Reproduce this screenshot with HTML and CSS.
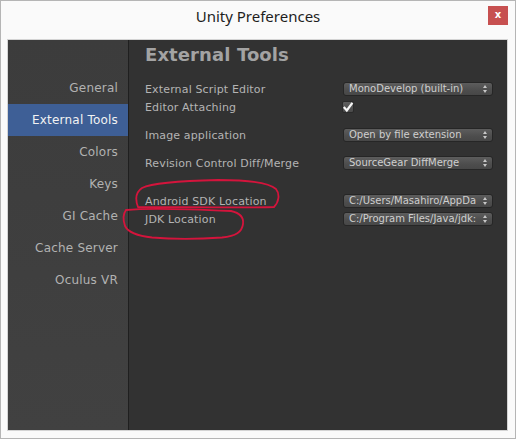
FILE: index.html
```html
<!DOCTYPE html>
<html>
<head>
<meta charset="utf-8">
<link rel="stylesheet" href="styles.css">
</head>
<body>
<div class="window">
  <div class="titlebar">
    <div class="title">Unity Preferences</div>
    <div class="close">x</div>
  </div>
  <div class="frame">
    <div class="content">
      <ul class="sidebar">
        <li>General</li>
        <li class="active">External Tools</li>
        <li>Colors</li>
        <li>Keys</li>
        <li>GI Cache</li>
        <li>Cache Server</li>
        <li>Oculus VR</li>
      </ul>
      <div class="main">
        <h1 class="heading">External Tools</h1>
        <div class="group">
          <div class="row"><span class="label">External Script Editor</span><div class="popup"><span class="ptext">MonoDevelop (built-in)</span><span class="arrows"></span></div></div>
          <div class="row"><span class="label">Editor Attaching</span><div class="check"><svg viewBox="0 0 12 12" width="12" height="12"><path d="M1.8 6 L4.8 9.4 L10.4 1.8" fill="none" stroke="#f6f6f6" stroke-width="2.2"/></svg></div></div>
        </div>
        <div class="group">
          <div class="row"><span class="label">Image application</span><div class="popup"><span class="ptext">Open by file extension</span><span class="arrows"></span></div></div>
        </div>
        <div class="group">
          <div class="row"><span class="label">Revision Control Diff/Merge</span><div class="popup"><span class="ptext">SourceGear DiffMerge</span><span class="arrows"></span></div></div>
        </div>
        <div class="group sdk">
          <div class="row"><span class="label">Android SDK Location</span><div class="popup"><span class="ptext">C:/Users/Masahiro/AppDa</span><span class="arrows"></span></div></div>
          <div class="row"><span class="label">JDK Location</span><div class="popup"><span class="ptext">C:/Program Files/Java/jdk:</span><span class="arrows"></span></div></div>
        </div>
      </div>
    </div>
  </div>
  <svg class="marks" width="516" height="439" viewBox="0 0 516 439">
    <path d="M138 207 C135 199 136 192 142 188 C152 183 175 181 218 180 C245 180 268 182 276 189 C280 194 279 202 274 207 C250 208 180 207 138 207" fill="none" stroke="#d4143c" stroke-width="1.8" stroke-linecap="round"/>
    <path d="M126 210 C145 208 190 209 231 211 C240 213 244 217 243 224 C242 232 236 236 222 237.5 C200 239 170 239 152 237.5 C138 236 128 232 125 226 C123 220 123 214 126 210" fill="none" stroke="#d4143c" stroke-width="1.8" stroke-linecap="round"/>
  </svg>
</div>
</body>
</html>
```

FILE: styles.css
```css
* { box-sizing: border-box; }
html, body { margin: 0; padding: 0; }
body { width: 516px; height: 439px; background: #f9f9f9; overflow: hidden; }

.window {
  position: relative;
  width: 516px;
  height: 439px;
  border: 1px solid #b5b5b5;
  background: #fafafa;
  display: flex;
  flex-direction: column;
}

.titlebar {
  height: 38px;
  position: relative;
  display: flex;
  justify-content: center;
  align-items: flex-start;
}
.title {
  font-family: "Noto Sans", "Open Sans", sans-serif;
  font-size: 15px;
  color: #1e1e1e;
  margin-top: 5px;
  line-height: 20px;
}
.close {
  position: absolute;
  right: 7px;
  top: 5px;
  width: 20px;
  height: 19px;
  background: #c75050;
  color: #fff;
  font-family: "DejaVu Sans", sans-serif;
  font-weight: bold;
  font-size: 10px;
  line-height: 18px;
  text-align: center;
}

.frame {
  flex: 1;
  padding: 0 7px 7px 6px;
  display: flex;
}
.content {
  flex: 1;
  border: 1px solid #d4d4d4;
  display: flex;
  background: #323232;
}

.sidebar {
  list-style: none;
  margin: 0;
  padding: 32px 0 0 0;
  width: 121px;
  background: linear-gradient(#3c3c3c, #414141);
  border-right: 1px solid #1f1f1f;
  font-family: "DejaVu Sans", sans-serif;
  font-size: 12px;
  letter-spacing: 0.2px;
}
.sidebar li {
  height: 32px;
  line-height: 32px;
  text-align: right;
  padding-right: 10px;
  color: #b2b2b2;
}
.sidebar li.active {
  background: #3e5f96;
  color: #f2f2f2;
}

.main {
  flex: 1;
  padding: 4px 14px 0 16px;
  font-family: "DejaVu Sans", sans-serif;
  color: #b4b4b4;
}
.heading {
  margin: 0 0 14px 0;
  font-size: 18px;
  font-weight: bold;
  color: #a3a3a3;
  line-height: 22px;
  letter-spacing: 0.1px;
}
.group { margin-bottom: 10px; }
.group.sdk { margin-top: 20px; }
.row {
  height: 18px;
  display: flex;
  align-items: center;
}
.label {
  width: 198px;
  font-size: 11px;
  letter-spacing: 0.15px;
  color: #b4b4b4;
}
.popup {
  width: 150px;
  height: 14px;
  border-radius: 3px;
  border: 1px solid #262626;
  background: linear-gradient(#5d5d5d, #4d4d4d 60%, #474747);
  display: flex;
  align-items: center;
  padding: 0 4px 0 5px;
  position: relative;
}
.ptext {
  flex: 1;
  font-size: 10px;
  color: #cfcfcf;
  white-space: nowrap;
  overflow: hidden;
  line-height: 12px;
}
.arrows {
  width: 5px;
  height: 8px;
  position: relative;
  margin-left: 2px;
}
.arrows::before, .arrows::after {
  content: "";
  position: absolute;
  left: 0;
  border-left: 2.5px solid transparent;
  border-right: 2.5px solid transparent;
}
.arrows::before { top: 0; border-bottom: 3px solid #c8c8c8; }
.arrows::after { bottom: 0; border-top: 3px solid #c8c8c8; }

.check {
  width: 12px;
  height: 12px;
  border-radius: 2px;
  border: 1px solid #2a2a2a;
  background: linear-gradient(#5e5e5e, #4a4a4a);
  display: flex;
  align-items: center;
  justify-content: center;
  margin-left: -1px;
}
.check svg { display: block; flex: none; }

.marks {
  position: absolute;
  left: -1px;
  top: -1px;
  pointer-events: none;
}
```
